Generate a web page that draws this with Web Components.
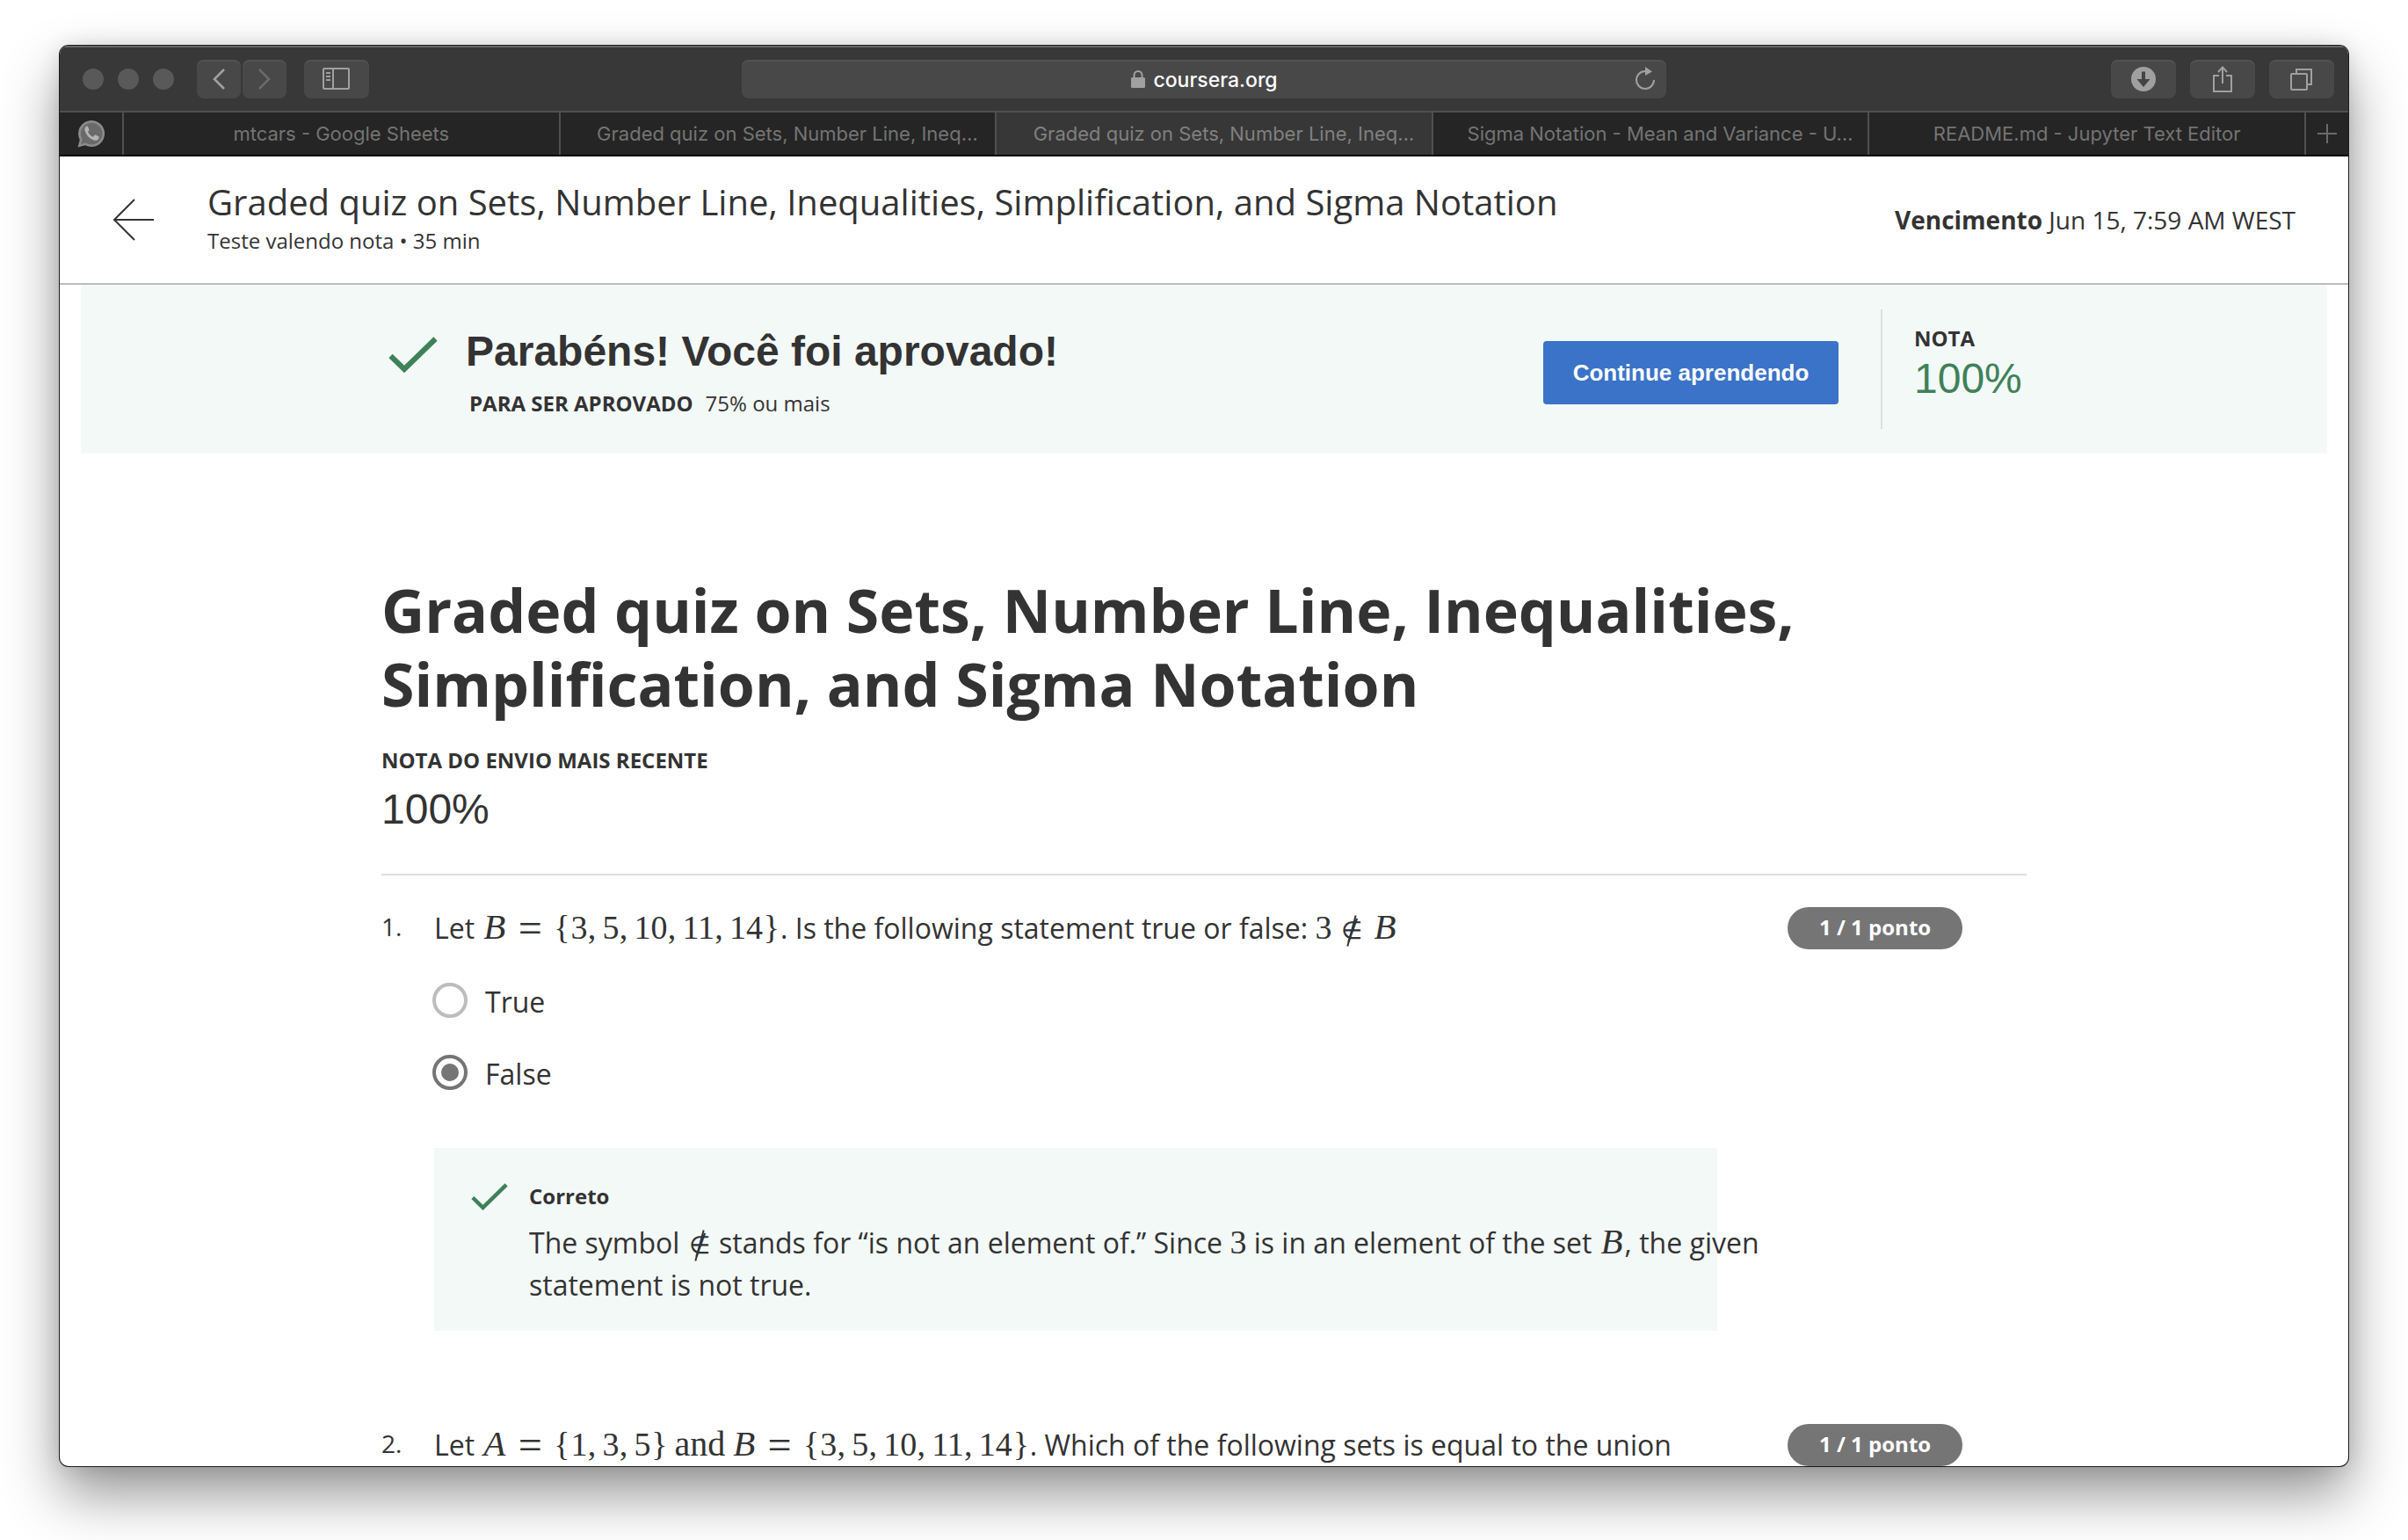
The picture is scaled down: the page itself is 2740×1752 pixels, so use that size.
<!DOCTYPE html>
<html lang="pt">
<head>
<meta charset="utf-8">
<title>coursera.org</title>
<style>
  body { margin: 0; background: #fff; color: #333; font-family: "Open Sans", sans-serif; font-size: 32px; line-height: 48px; }
</style>
</head>
<body>
<browser-window>
  <browser-toolbar slot="toolbar" address="coursera.org"></browser-toolbar>
  <tab-strip slot="tabs">
    <browser-tab>mtcars - Google Sheets</browser-tab>
    <browser-tab clipped>Graded quiz on Sets, Number Line, Ineq…</browser-tab>
    <browser-tab clipped active>Graded quiz on Sets, Number Line, Ineq…</browser-tab>
    <browser-tab clipped>Sigma Notation - Mean and Variance - U…</browser-tab>
    <browser-tab>README.md - Jupyter Text Editor</browser-tab>
  </tab-strip>
  <quiz-header>
    <span slot="title">Graded quiz on Sets, Number Line, Inequalities, Simplification, and Sigma Notation</span>
    <span slot="meta">Teste valendo nota • 35 min</span>
    <span slot="due"><b>Vencimento</b> Jun 15, 7:59 AM WEST</span>
  </quiz-header>
  <grade-banner>
    <span slot="title">Parabéns! Você foi aprovado!</span>
    <span slot="need">PARA SER APROVADO</span>
    <span slot="threshold">75% ou mais</span>
    <span slot="action">Continue aprendendo</span>
    <span slot="label">NOTA</span>
    <span slot="grade">100%</span>
  </grade-banner>
  <quiz-sheet>
    <span slot="title">Graded quiz on Sets, Number Line, Inequalities, Simplification, and Sigma Notation</span>
    <span slot="label">NOTA DO ENVIO MAIS RECENTE</span>
    <span slot="grade">100%</span>
    <quiz-question number="1." points="1 / 1 ponto">
      <span slot="prompt">Let <math-expr expr="B={3,5,10,11,14}"></math-expr>. Is the following statement true or false: <math-expr expr="3∉B"></math-expr></span>
      <answer-option name="q1">True</answer-option>
      <answer-option name="q1" checked>False</answer-option>
      <answer-feedback slot="feedback">
        <span slot="verdict">Correto</span>
        <span>The symbol <math-expr expr="∉"></math-expr> stands for “is not an element of.” Since <math-expr expr="3"></math-expr> is in an element of the set <math-expr expr="B"></math-expr>, the given</span><br>
        <span>statement is not true.</span>
      </answer-feedback>
    </quiz-question>
    <quiz-question number="2." points="1 / 1 ponto">
      <span slot="prompt">Let <math-expr expr="A={1,3,5} and B={3,5,10,11,14}"></math-expr>. Which of the following sets is equal to the union</span>
    </quiz-question>
  </quiz-sheet>
</browser-window>

<script>
function define(name, html, setup) {
  const template = document.createElement('template');
  template.innerHTML = html;
  customElements.define(name, class extends HTMLElement {
    constructor() {
      super();
      this.attachShadow({ mode: 'open' }).append(template.content.cloneNode(true));
    }
    connectedCallback() { if (setup) setup(this, this.shadowRoot); }
  });
}

define('browser-window', `
<style>
  :host { display: flex; box-sizing: border-box; height: 100vh; padding: 52px 68px 84px; }
  .frame { flex: 1; min-width: 0; display: flex; flex-direction: column; overflow: hidden; border-radius: 10px; background: #fff;
    box-shadow: 0 0 0 1px #1c1c1c, 0 32px 64px rgba(0,0,0,.42), 0 0 24px rgba(0,0,0,.12); }
  .chrome { flex: none; }
  main { flex: 1; min-height: 0; overflow: hidden; }
</style>
<div class="frame">
  <div class="chrome"><slot name="toolbar"></slot><slot name="tabs"></slot></div>
  <main><slot></slot></main>
</div>`);

define('browser-toolbar', `
<style>
  :host { display: block; background: #383838; border-top: 2px solid #666; border-bottom: 2px solid #505050; box-sizing: border-box; height: 76px; padding: 14px 16px 0; color: #a0a0a0; }
  .bar { display: grid; grid-template-columns: 1fr minmax(0, 1052px) 1fr; align-items: center; height: 44px; }
  .group { display: flex; align-items: center; }
  .lights { display: flex; gap: 16px; margin: 0 26px 0 10px; }
  .lights i { width: 24px; height: 24px; border-radius: 50%; background: #595959; }
  button { display: flex; align-items: center; justify-content: center; box-sizing: border-box; width: 74px; height: 44px; padding: 0; border: 0; border-radius: 8px; background: #484848; box-shadow: inset 0 2px 0 #525252; color: inherit; }
  .nav { width: 50px; margin-right: 2px; }
  .side { margin-left: 18px; }
  .off { color: #6a6a6a; }
  svg { display: block; fill: none; stroke: currentColor; stroke-width: 2; }
  .url { display: grid; grid-template-columns: 36px 1fr 36px; align-items: center; height: 44px; border-radius: 8px; background: #484848; box-shadow: inset 0 2px 0 #525252; }
  .addr { grid-column: 2; display: flex; justify-content: center; align-items: center; gap: 8px; }
  input { field-sizing: content; border: 0; padding: 2px 0 0; background: none; color: #fff; font: 500 23px/36px Inter, sans-serif; outline: 0; }
  .url button { width: 24px; height: 28px; background: none; box-shadow: none; }
  .right { justify-content: flex-end; gap: 16px; }
</style>
<div class="bar">
  <div class="group">
    <div class="lights"><i></i><i></i><i></i></div>
    <button class="nav" aria-label="Back"><svg width="18" height="26" viewBox="0 0 18 26"><path d="M15 2 4 13 15 24" stroke-width="2.6"/></svg></button>
    <button class="nav off" aria-label="Forward"><svg width="18" height="26" viewBox="0 0 18 26"><path d="M3 2 14 13 3 24" stroke-width="2.6"/></svg></button>
    <button class="side" aria-label="Sidebar"><svg width="32" height="26" viewBox="0 0 32 26"><rect x="1" y="1" width="29" height="23" rx="1"/><path d="M12 1v23M4 6h5M4 10h5M4 14h5"/></svg></button>
  </div>
  <div class="url">
    <div class="addr">
      <svg width="18" height="22" viewBox="0 0 18 22"><path d="M4.500 10V6.500a4.500 4.500 0 0 1 9 0V10"/><rect x="1" y="9" width="16" height="12" rx="1.500" fill="currentColor" stroke="none"/></svg>
      <input type="text" aria-label="Address" readonly>
    </div>
    <button aria-label="Reload"><svg width="24" height="28" viewBox="0 0 24 28"><path d="M12 5A10 10 0 1 0 22 15"/><path d="M12 0l8 5.500-8 4.500z" fill="currentColor" stroke="none"/></svg></button>
  </div>
  <div class="group right">
    <button aria-label="Downloads"><svg width="28" height="28" viewBox="0 0 28 28"><circle cx="14" cy="14" r="14" fill="currentColor" stroke="none"/><path d="M14 5.500V17" stroke="#444" stroke-width="4"/><path d="M6.500 14h15L14 23z" fill="#444" stroke="none"/></svg></button>
    <button aria-label="Share"><svg width="24" height="32" viewBox="0 0 24 32"><path d="M8 12H2v18h20V12h-6M12 21V3M7 8l5-5.500L17 8"/></svg></button>
    <button aria-label="Tabs"><svg width="26" height="26" viewBox="0 0 26 26"><rect x="1" y="7" width="18" height="18" rx="1"/><path d="M7 7V2h17v17h-5"/></svg></button>
  </div>
</div>`, (el, root) => { root.querySelector('input').value = el.getAttribute('address'); });

define('tab-strip', `
<style>
  :host { display: flex; box-sizing: border-box; height: 50px; background: #252525; border-bottom: 2px solid #000; color: #747474; }
  button { flex: none; display: flex; align-items: center; justify-content: center; padding: 0; border: 0; background: none; color: inherit; }
  .pin { width: 71px; }
  .add { width: 50px; border-left: 2px solid #505050; }
  nav { flex: 1; min-width: 0; display: flex; }
</style>
<button class="pin" aria-label="WhatsApp"><svg width="34" height="34" viewBox="0 0 34 34"><path d="M1.500 32.500 3.800 24A15 15 0 1 1 10 30.200z" fill="#8c8c8c"/><path d="M5 29 6.600 23.600A12.400 12.400 0 1 1 10.600 27.600z" fill="#6a6a6a"/><path d="M11.500 8.500c-2 1-2.600 3-1.800 5.500 1.700 5 5 8.500 10 10.500 3 1 5-.2 5.800-2.500l.2-1.500-4.500-2.300-2.400 2.500c-2.600-1-4.800-3.200-5.800-5.600l1.600-2.200-1.700-4.200z" fill="#b4b4b4"/></svg></button>
<nav><slot></slot></nav>
<button class="add" aria-label="New tab"><svg width="24" height="24" viewBox="0 0 24 24"><path d="M12 1v22M1 12h22" stroke="#6a6a6a" stroke-width="2"/></svg></button>`);

define('browser-tab', `
<style>
  :host { flex: 1; min-width: 0; display: flex; border-left: 2px solid #505050; }
  :host([active]) { background: #373737; color: #808080; }
  button { flex: 1; min-width: 0; overflow: hidden; white-space: nowrap; border: 0; padding: 0; background: none; color: inherit; font: 400 22px/32px Inter, sans-serif; text-align: center; }
  :host([clipped]) button { padding-left: 22px; }
</style>
<button><slot></slot></button>`);

define('quiz-header', `
<style>
  :host { display: flex; align-items: center; box-sizing: border-box; height: 146px; padding: 0 60px; border-bottom: 2px solid #bdbdbd; }
  a { display: block; width: 48px; height: 48px; margin-right: 60px; }
  div { flex: 1; height: 94px; }
  h2, p { margin: 0; font-weight: 400; }
  h2 { font-size: 40px; line-height: 54px; }
  p { font-size: 24px; line-height: 34px; }
  .due { font-size: 28px; line-height: 40px; }
</style>
<a href="#" aria-label="Voltar"><svg width="48" height="48" viewBox="0 0 48 48" fill="none" stroke="#333" stroke-width="2"><path d="M47 24H2M25 1 2 24 25 47"/></svg></a>
<div><h2><slot name="title"></slot></h2><p><slot name="meta"></slot></p></div>
<span class="due"><slot name="due"></slot></span>`);

define('check-mark', `
<style>:host { display: block; } svg { display: block; width: 100%; }</style>
<svg viewBox="0 0 56 42" fill="none" stroke="#3f8159" stroke-width="6"><path d="M2.500 22 18 37 53.500 2.500"/></svg>`);

define('grade-banner', `
<style>
  :host { display: flex; justify-content: center; margin: 0 24px; background: #f3f9f7; }
  section { display: flex; align-items: flex-start; width: 1872px; min-height: 192px; }
  check-mark { width: 56px; margin: 59px 32px 0 8px; }
  .text { flex: 1; padding-top: 46px; }
  h3, p { margin: 0; }
  h3 { font: 700 48px/60px "Liberation Sans", sans-serif; }
  .need { padding: 11px 4px; font-size: 24px; line-height: 36px; }
  .need b { margin-right: 14px; }
  button { width: 336px; height: 72px; margin-top: 64px; padding: 0; border: 0; border-radius: 4px; background: #3a73c8; color: #fff; font: 700 26px/36px "Liberation Sans", sans-serif; }
  .score { box-sizing: border-box; width: 166px; height: 136px; margin: 28px 0 0 48px; padding: 15px 0 0 36px; border-left: 2px solid #dcdfde; }
  .score b { display: block; font-size: 24px; line-height: 36px; }
  .score span { font: 48px/56px "Liberation Sans", sans-serif; color: #3f8159; }
</style>
<section>
  <check-mark></check-mark>
  <div class="text"><h3><slot name="title"></slot></h3><p class="need"><b><slot name="need"></slot></b><slot name="threshold"></slot></p></div>
  <button><slot name="action"></slot></button>
  <div class="score"><b><slot name="label"></slot></b><span><slot name="grade"></slot></span></div>
</section>`);

define('quiz-sheet', `
<style>
  :host { display: block; max-width: 1872px; margin: 0 auto; padding-top: 136px; }
  h1 { margin: 0; font-size: 68px; line-height: 84px; }
  .label { margin: 27px 0 10px; font-weight: 700; font-size: 24px; line-height: 36px; }
  .grade { margin: 0; padding-bottom: 45px; border-bottom: 2px solid #ddd; font: 48px/56px "Liberation Sans", sans-serif; }
</style>
<h1><slot name="title"></slot></h1>
<p class="label"><slot name="label"></slot></p>
<p class="grade"><slot name="grade"></slot></p>
<slot></slot>`);

define('quiz-question', `
<style>
  :host { display: grid; grid-template-columns: 60px 1460px auto; padding: 36px 72px 70px 0; justify-content: start; }
  .number { font-size: 28px; line-height: 44px; }
  .badge { justify-self: end; margin-left: 80px; height: 48px; padding: 0 36px; border-radius: 24px; background: #757575; color: #fff; font-weight: 700; font-size: 24px; line-height: 46px; white-space: nowrap; }
  .options { display: flex; flex-direction: column; gap: 34px; padding: 36px 0 60px; border: 0; margin: 0; }
</style>
<span class="number"></span>
<div><slot name="prompt"></slot><fieldset class="options"><slot></slot></fieldset><slot name="feedback"></slot></div>
<span class="badge"></span>`, (el, root) => {
  root.querySelector('.number').textContent = el.getAttribute('number');
  root.querySelector('.badge').textContent = el.getAttribute('points');
});

define('answer-option', `
<style>
  :host { display: block; margin-left: -2px; }
  label { display: flex; align-items: flex-start; gap: 20px; }
  input { appearance: none; display: grid; place-items: center; box-sizing: border-box; width: 40px; height: 40px; margin: 2px 0 0; border: 4px solid #bdbdbd; border-radius: 50%; }
  input:checked { border-color: #757575; }
  input:checked::before { content: ""; width: 20px; height: 20px; border-radius: 50%; background: #757575; }
</style>
<label><input type="radio"><span><slot></slot></span></label>`, (el, root) => {
  const input = root.querySelector('input');
  input.name = el.getAttribute('name');
  input.checked = el.hasAttribute('checked');
});

define('answer-feedback', `
<style>
  :host { display: flex; gap: 24px; padding: 36px 0 28px 42px; background: #f3f9f7; }
  check-mark { flex: none; width: 42px; margin-top: 4px; }
  .body { flex: 1; min-width: 0; }
  b { display: block; font-size: 24px; line-height: 38px; margin-bottom: 10px; }
  p { margin: 0 -80px 0 0; }
</style>
<check-mark></check-mark>
<div class="body"><b><slot name="verdict"></slot></b><p><slot></slot></p></div>`);

define('math-expr', `
<style>
  :host { display: inline; white-space: nowrap; font-family: "Liberation Serif", serif; font-size: 38px; line-height: 0; }
  span, i { display: inline-block; text-align: center; line-height: 0; }
  i { width: 29px; font-size: 41px; }
  .eq { width: 30px; margin: 0 11px; font-size: 48px; vertical-align: -4px; }
  .in { position: relative; width: 28px; font: 200 28px/0 "DejaVu Sans Light", "DejaVu Sans", sans-serif; }
  .in::after { content: ""; position: absolute; left: 13px; top: -18px; width: 2px; height: 36px; background: currentColor; transform: rotate(15deg); }
  .mid { margin: 0 9px; }
  .comma { width: 10px; margin-right: 7px; }
  .brace { width: 20px; }
  .word { margin: 0 7px; font-size: 40px; }
</style>`, (el, root) => {
  if (root.querySelector('span, i')) return;
  const expr = el.getAttribute('expr');
  for (const token of expr.match(/[A-Z]|[a-z]+|\d+|[={},∉]/g)) {
    const node = document.createElement(/[A-Z]/.test(token) ? 'i' : 'span');
    node.textContent = token;
    if (token === '=') node.className = 'eq';
    else if (token === '∉') node.className = expr === token ? 'in' : 'in mid';
    else if (token === ',') node.className = 'comma';
    else if (/[{}]/.test(token)) node.className = 'brace';
    else if (/[a-z]/.test(token)) node.className = 'word';
    root.append(node);
  }
});
</script>
</body>
</html>
